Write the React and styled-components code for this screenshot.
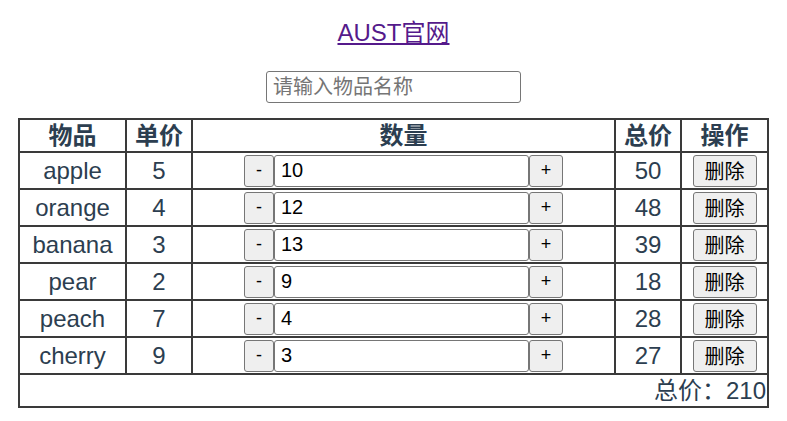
import * as React from "react";
import styled, { createGlobalStyle } from "styled-components";

const GlobalStyle = createGlobalStyle`
    body {
        margin: 8px;
        background: #ffffff;
        font-family: "Liberation Sans", Arial, "Noto Sans CJK SC", sans-serif;
    }
`;

const Page = styled.div`
    display: flex;
    flex-direction: column;
    align-items: center;
    color: #2c3e50;
`;

const TitleLink = styled.a`
    display: block;
    margin-top: 11px;
    font-size: 24px;
    line-height: 28px;
    color: #551a8b;
    text-decoration: underline;
`;

const SearchInput = styled.input`
    box-sizing: border-box;
    width: 255px;
    height: 32px;
    margin-top: 24px;
    padding: 0 6px;
    font-family: inherit;
    font-size: 20px;
    color: #000;
    border: 1px solid #767676;
    border-radius: 3px;

    &::placeholder {
        color: #757575;
    }
`;

const Table = styled.table`
    margin-top: 15px;
    width: 751px;
    table-layout: fixed;
    border: 1px solid #3a3a3a;
    border-spacing: 0;
    font-size: 24px;
    line-height: 28px;
    color: #2c3e50;
`;

const HeadCell = styled.th`
    box-sizing: border-box;
    width: ${props => props.w}px;
    height: 33px;
    padding: 0;
    border: 1px solid #3a3a3a;
    font-weight: bold;
    text-align: center;
`;

const Cell = styled.td`
    box-sizing: border-box;
    height: 37px;
    padding: 0;
    border: 1px solid #3a3a3a;
    text-align: center;
    vertical-align: middle;
`;

const FootCell = styled.td`
    box-sizing: border-box;
    height: 33px;
    padding: 0 1px 0 0;
    border: 1px solid #3a3a3a;
    text-align: right;
`;

const Counter = styled.div`
    display: flex;
    justify-content: center;
    align-items: center;
`;

const Button = styled.button`
    box-sizing: border-box;
    width: ${props => props.w}px;
    height: 32px;
    padding: 0;
    font-family: inherit;
    font-size: ${props => props.fs || 18}px;
    color: #000;
    background: #efefef;
    border: 1px solid #767676;
    border-radius: 3px;
`;

const CountInput = styled.input`
    box-sizing: border-box;
    width: 255px;
    height: 32px;
    padding: 0 6px;
    font-family: inherit;
    font-size: 20px;
    color: #000;
    border: 1px solid #767676;
    border-radius: 3px;
`;

const goods = [
    { name: "apple", price: 5, count: 10 },
    { name: "orange", price: 4, count: 12 },
    { name: "banana", price: 3, count: 13 },
    { name: "pear", price: 2, count: 9 },
    { name: "peach", price: 7, count: 4 },
    { name: "cherry", price: 9, count: 3 },
];

export default function App() {
    const total = goods.reduce((sum, g) => sum + g.price * g.count, 0);
    return (
        <Page>
            <GlobalStyle />
            <TitleLink href="#">AUST官网</TitleLink>
            <SearchInput placeholder="请输入物品名称" />
            <Table>
                <thead>
                    <tr>
                        <HeadCell w={107}>物品</HeadCell>
                        <HeadCell w={66}>单价</HeadCell>
                        <HeadCell w={423}>数量</HeadCell>
                        <HeadCell w={66}>总价</HeadCell>
                        <HeadCell w={87}>操作</HeadCell>
                    </tr>
                </thead>
                <tbody>
                    {goods.map(g => (
                        <tr key={g.name}>
                            <Cell>{g.name}</Cell>
                            <Cell>{g.price}</Cell>
                            <Cell>
                                <Counter>
                                    <Button w={30}>-</Button>
                                    <CountInput defaultValue={g.count} />
                                    <Button w={34}>+</Button>
                                </Counter>
                            </Cell>
                            <Cell>{g.price * g.count}</Cell>
                            <Cell>
                                <Button w={64} fs={20}>删除</Button>
                            </Cell>
                        </tr>
                    ))}
                    <tr>
                        <FootCell colSpan={5}>总价：{total}</FootCell>
                    </tr>
                </tbody>
            </Table>
        </Page>
    );
}
